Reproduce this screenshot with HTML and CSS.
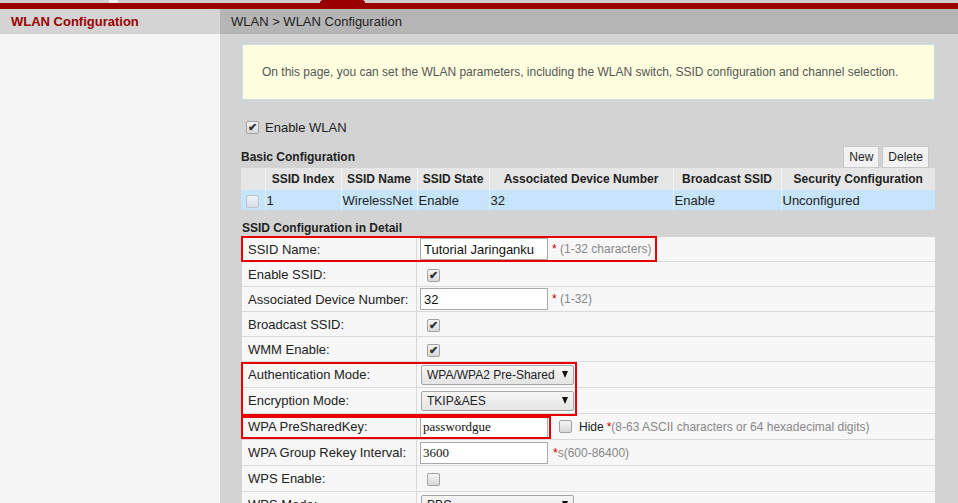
FILE: index.html
```html
<!DOCTYPE html>
<html>
<head>
<meta charset="utf-8">
<link rel="stylesheet" href="styles.css">
</head>
<body>
<div class="page">
  <div class="topstrip"><span class="tabwhite"></span><span class="tabred"></span></div>
  <div class="redbar"></div>
  <div class="header">
    <div class="hleft">WLAN Configuration</div>
    <div class="hright">WLAN &gt; WLAN Configuration</div>
  </div>
  <div class="body">
    <div class="sidebar"></div>
    <div class="main">
      <div class="info">On this page, you can set the WLAN parameters, including the WLAN switch, SSID configuration and channel selection.</div>
      <div class="enable"><span class="cb checked">&#10004;</span><span class="enable-text">Enable WLAN</span></div>
      <div class="basic-head">
        <div class="sect">Basic Configuration</div>
        <div class="btns"><button class="btn">New</button><button class="btn">Delete</button></div>
      </div>
      <table class="basic">
        <colgroup>
          <col class="c0"><col class="c1"><col class="c2"><col class="c3"><col class="c4"><col class="c5"><col class="c6">
        </colgroup>
        <thead>
          <tr>
            <th></th>
            <th>SSID Index</th>
            <th>SSID Name</th>
            <th>SSID State</th>
            <th>Associated Device Number</th>
            <th>Broadcast SSID</th>
            <th>Security Configuration</th>
          </tr>
        </thead>
        <tbody>
          <tr>
            <td class="first"><span class="cb light"></span></td>
            <td>1</td>
            <td>WirelessNet</td>
            <td>Enable</td>
            <td>32</td>
            <td>Enable</td>
            <td>Unconfigured</td>
          </tr>
        </tbody>
      </table>
      <div class="sect detail-title">SSID Configuration in Detail</div>
      <div class="detail-wrap">
        <table class="detail">
          <tr><td class="lbl">SSID Name:</td><td class="val"><input class="txt" type="text" value="Tutorial Jaringanku"><span class="hint"><span class="star">*</span> (1-32 characters)</span></td></tr>
          <tr><td class="lbl">Enable SSID:</td><td class="val"><span class="cb checked ind">&#10004;</span></td></tr>
          <tr><td class="lbl">Associated Device Number:</td><td class="val"><input class="txt" type="text" value="32"><span class="hint"><span class="star">*</span> (1-32)</span></td></tr>
          <tr><td class="lbl">Broadcast SSID:</td><td class="val"><span class="cb checked ind">&#10004;</span></td></tr>
          <tr><td class="lbl">WMM Enable:</td><td class="val"><span class="cb checked ind">&#10004;</span></td></tr>
          <tr class="tall"><td class="lbl">Authentication Mode:</td><td class="val"><div class="sel"><span>WPA/WPA2 Pre-Shared</span><i class="arrow"></i></div></td></tr>
          <tr class="tall"><td class="lbl">Encryption Mode:</td><td class="val"><div class="sel"><span>TKIP&amp;AES</span><i class="arrow"></i></div></td></tr>
          <tr class="tall"><td class="lbl">WPA PreSharedKey:</td><td class="val"><input class="txt serif" type="text" value="passwordgue"><span class="cb ind2"></span><span class="hide">Hide</span><span class="hint2"><span class="star">*</span>(8-63 ASCII characters or 64 hexadecimal digits)</span></td></tr>
          <tr class="tall"><td class="lbl">WPA Group Rekey Interval:</td><td class="val"><input class="txt serif" type="text" value="3600"><span class="hint2 h3"><span class="star">*</span>s(600-86400)</span></td></tr>
          <tr class="tall"><td class="lbl">WPS Enable:</td><td class="val"><span class="cb ind"></span></td></tr>
          <tr class="tall"><td class="lbl">WPS Mode:</td><td class="val"><div class="sel"><span>PBC</span><i class="arrow"></i></div></td></tr>
        </table>
        <div class="mark m1"></div>
        <div class="mark m2"></div>
        <div class="mark m3"></div>
      </div>
    </div>
  </div>
</div>
</body>
</html>
```

FILE: styles.css
```css
html, body {
  margin: 0;
  padding: 0;
}
body {
  font-family: "Liberation Sans", Arial, sans-serif;
  font-size: 13px;
  color: #222;
  overflow: hidden;
  background: #d3d3d3;
}
.page {
  width: 958px;
  height: 503px;
  overflow: hidden;
  display: flex;
  flex-direction: column;
}
.topstrip {
  height: 3px;
  background: #cfcfcf;
  position: relative;
  flex: none;
}
.tabwhite {
  position: absolute;
  left: 109px;
  top: 0;
  width: 9px;
  height: 3px;
  background: #f2f2f2;
}
.tabred {
  position: absolute;
  left: 320px;
  top: 0;
  width: 45px;
  height: 3px;
  background: #990000;
  border-radius: 4px 4px 0 0;
}
.redbar {
  height: 6px;
  background: #990000;
  flex: none;
}
.header {
  height: 25px;
  display: flex;
  flex: none;
}
.hleft {
  width: 220px;
  background: #d4d4d4;
  color: #990000;
  font-weight: bold;
  line-height: 25px;
  padding-left: 11px;
  box-sizing: border-box;
}
.hright {
  flex: 1;
  background: #b5b5b5;
  line-height: 25px;
  padding-left: 11px;
  color: #222;
}
.body {
  flex: 1;
  display: flex;
  min-height: 0;
}
.sidebar {
  width: 220px;
  background: #f5f5f5;
  flex: none;
}
.main {
  flex: 1;
  background: #d3d3d3;
  padding: 10px 23px 0 22px;
  min-width: 0;
}
.info {
  height: 56px;
  box-sizing: border-box;
  background: #ffffe0;
  border: 1px solid #c6def0;
  display: flex;
  align-items: center;
  padding-left: 19px;
  font-size: 12px;
  color: #555;
}
.enable {
  margin-top: 19px;
  height: 16px;
  display: flex;
  align-items: center;
  padding-left: 4px;
}
.enable-text {
  margin-left: 6px;
  color: #222;
}
.cb {
  display: inline-block;
  width: 11px;
  height: 11px;
  border: 1px solid #a2a2a2;
  border-radius: 2px;
  background: linear-gradient(#f4f4f4, #d8d8d8);
  font-size: 11px;
  font-weight: bold;
  line-height: 11px;
  text-align: center;
  color: #333;
  vertical-align: middle;
  flex: none;
}
.cb.light {
  background: linear-gradient(#eef4f8, #d5dde3);
  border-color: #b8c3cc;
}
.basic-head {
  margin-top: 11px;
  height: 22px;
  display: flex;
  justify-content: space-between;
  align-items: center;
  margin-left: -1px;
}
.sect {
  font-weight: bold;
  font-size: 12px;
  color: #222;
}
.btns {
  display: flex;
  gap: 3px;
  margin-right: 6px;
  align-self: stretch;
}
.btn {
  font-family: "Liberation Sans", Arial, sans-serif;
  font-size: 12px;
  color: #222;
  background: #f2f2f2;
  border: 1px solid #c9c9c9;
  padding: 0 5px;
  height: 22px;
  margin: 0;
}
.basic {
  border-collapse: collapse;
  width: 694px;
  margin-left: -1px;
  table-layout: fixed;
}
.basic col.c0 { width: 24px; }
.basic col.c1 { width: 76px; }
.basic col.c2 { width: 76px; }
.basic col.c3 { width: 72px; }
.basic col.c4 { width: 184px; }
.basic col.c5 { width: 108px; }
.basic col.c6 { width: 154px; }
.basic th {
  background: #e6e6e6;
  font-size: 12px;
  font-weight: bold;
  height: 22px;
  padding: 0;
  text-align: center;
  border-left: 1px solid #f4f4f4;
  color: #222;
}
.basic th:first-child { border-left: none; }
.basic td {
  background: #c6e5fa;
  height: 20px;
  padding: 0 0 0 1px;
  border-left: 1px solid #e2f1fb;
  white-space: nowrap;
  overflow: hidden;
}
.basic td:first-child { border-left: none; }
.basic td.first { padding: 0 0 0 5px; }
.detail-title {
  margin-top: 10px;
  height: 17px;
  line-height: 17px;
}
.detail-wrap {
  position: relative;
}
.detail {
  border-collapse: collapse;
  width: 693px;
  table-layout: fixed;
}
.detail td {
  background: #f7f7f7;
  height: 24px;
  padding: 0;
  border-bottom: 1px solid #d9d9d9;
  white-space: nowrap;
}
.detail tr.tall td { height: 25px; }
.detail td.lbl {
  width: 168px;
  padding-left: 6px;
  border-right: 1px solid #d9d9d9;
}
.detail td.val {
  padding-left: 3px;
}
.txt {
  width: 128px;
  height: 22px;
  box-sizing: border-box;
  border: 1px solid #a9a9a9;
  padding: 0 3px;
  font-family: "Liberation Sans", Arial, sans-serif;
  font-size: 13px;
  color: #111;
  background: #fff;
  vertical-align: middle;
  margin: 0;
}
.txt.serif {
  font-family: "Liberation Serif", "Times New Roman", serif;
  font-size: 13px;
  padding: 0 2px;
}
.hint, .hint2 {
  color: #888;
  font-size: 12px;
  margin-left: 4px;
  vertical-align: middle;
}
.star {
  color: #c00000;
}
.ind {
  margin-left: 7px;
}
.ind2 {
  margin-left: 11px;
}
.hide {
  margin-left: 7px;
  font-size: 12px;
  color: #222;
  vertical-align: middle;
}
.hint2 { margin-left: 3px; }
.h3 { margin-left: 5px; }
.sel {
  display: inline-flex;
  align-items: center;
  justify-content: space-between;
  width: 153px;
  height: 20px;
  box-sizing: border-box;
  border: 1px solid #a6a6a6;
  border-radius: 2px;
  background: linear-gradient(#f6f6f6, #e4e4e4);
  padding: 0 5px 0 5px;
  vertical-align: middle;
  margin-left: 1px;
  color: #222;
  font-size: 12px;
}
.arrow {
  width: 0;
  height: 0;
  border-left: 3.5px solid transparent;
  border-right: 3.5px solid transparent;
  border-top: 7px solid #111;
}
.mark {
  position: absolute;
  border: 2px solid #e60000;
  box-sizing: border-box;
  pointer-events: none;
}
.m1 { left: -1px; top: -1px; width: 416px; height: 26px; }
.m2 { left: -1px; top: 125px; width: 336px; height: 54px; }
.m3 { left: -1px; top: 179px; width: 310px; height: 23px; }
```
